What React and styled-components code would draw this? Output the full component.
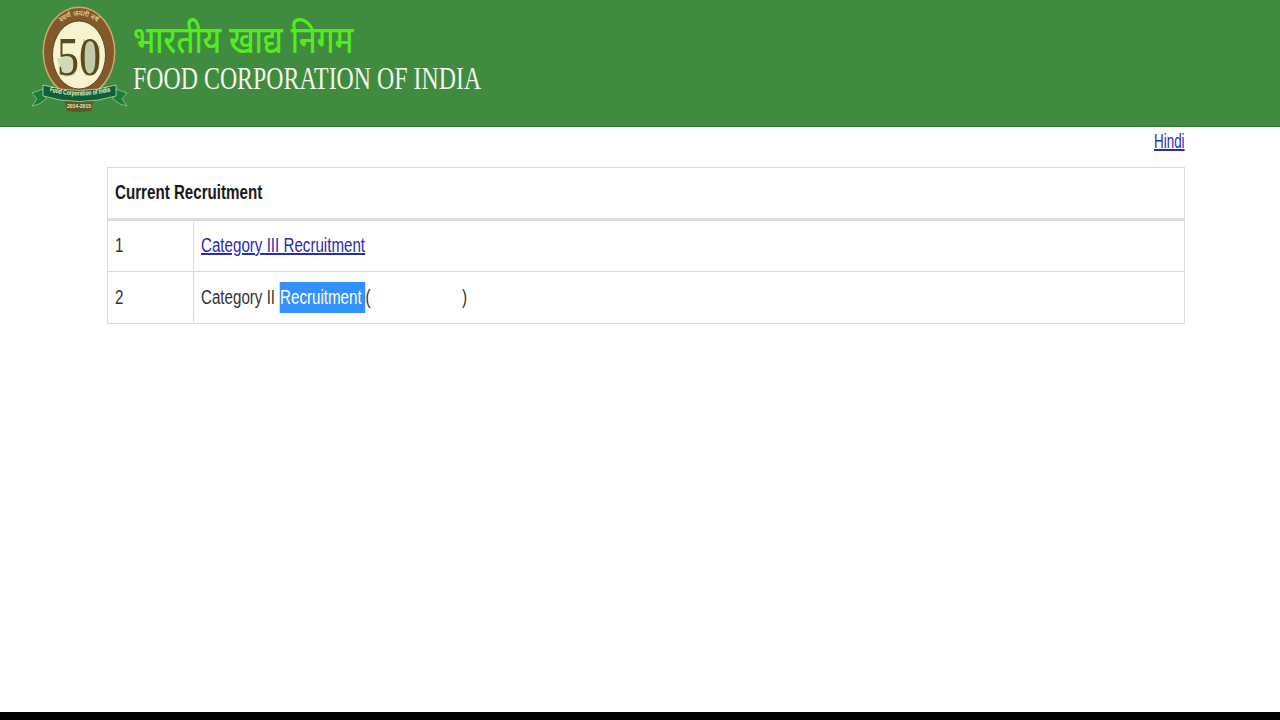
import styled, { createGlobalStyle } from "styled-components"

const GlobalStyle = createGlobalStyle`
    html, body {
        margin: 0;
        padding: 0;
        background: #fff;
    }
    body {
        font-family: "Liberation Sans", Arial, sans-serif;
        color: #333;
    }
`

const Page = styled.div`
    display: flex;
    flex-direction: column;
    height: 720px;
    overflow: hidden;
`

const Header = styled.header`
    display: flex;
    flex: none;
    align-items: flex-start;
    height: 126px;
    padding-left: 31px;
    background-color: #418b41;
    border-bottom: 1px solid #2f7a35;
`

const Logo = styled.svg`
    flex: none;
    width: 98px;
    height: 112px;
    margin-top: 3px;
`

const Brand = styled.div`
    display: flex;
    flex-direction: column;
    margin-left: 4px;
    padding-top: 16px;
`

const HindiName = styled.div`
    height: 45px;
    font-family: "Noto Sans", "Noto Sans Devanagari", sans-serif;
    font-size: 38px;
    line-height: 45px;
    font-weight: 500;
    color: #52ee1c;
    white-space: nowrap;
    transform: scaleX(0.808);
    transform-origin: left center;
`

const EnglishName = styled.div`
    font-family: "Liberation Serif", serif;
    font-size: 31px;
    line-height: 36px;
    color: #f1f7ea;
    white-space: nowrap;
    transform: scaleX(0.77);
    transform-origin: left center;
`

const Main = styled.main`
    flex: 1;
    padding: 0 95px 0 107px;
`

const LangRow = styled.div`
    display: flex;
    justify-content: flex-end;
    height: 40px;
    align-items: flex-start;
    padding-top: 2px;
    box-sizing: border-box;
`

const Narrow = styled.span`
    display: inline-block;
    font-size: 20px;
    line-height: 24px;
    white-space: pre;
    transform: scaleX(${(p) => p.$squeeze || 0.757});
    transform-origin: ${(p) => (p.$right ? "right" : "left")} center;
`

const TextLink = styled.a`
    color: #2a2ab8;
    text-decoration: underline;
`

const Table = styled.table`
    width: 1078px;
    border-collapse: collapse;
    table-layout: fixed;
`

const HeadCell = styled.th`
    height: 48px;
    padding: 0 7px 2px;
    box-sizing: content-box;
    text-align: left;
    font-weight: 700;
    color: #1a1a1a;
    border: 1px solid #dcdcdc;
    border-bottom: 3px solid #dcdcdc;
`

const Cell = styled.td`
    height: 52px;
    padding: 0 7px 2px;
    box-sizing: border-box;
    border: 1px solid #dcdcdc;
    color: #333;
`

const NumberCol = styled.col`
    width: 86px;
`

const Selected = styled.span`
    display: inline-block;
    padding: 3px 5px 4px 0;
    line-height: 24px;
    margin: -3px 0 -4px 1px;
    background-color: #3390ff;
    color: #fff;
`

const Blank = styled.span`
    display: inline-block;
    width: 121px;
`

const BottomBar = styled.div`
    flex: none;
    height: 8px;
    background-color: #000;
`

function EmblemLogo() {
    return (
        <Logo viewBox="0 0 98 112">
            <defs>
                <path id="ringArc" d="M19 36 A31 36 0 0 1 77 36" />
                <path id="ribbonArc" d="M14 87 Q48 98 84 87" />
            </defs>
            <path d="M33 96 L63 96 L60 108 Q48 110 36 108 Z" fill="#5d5a2a" />
            <ellipse cx="48" cy="49" rx="36.5" ry="45.5" fill="#c9ab6e" />
            <ellipse cx="48" cy="49" rx="35" ry="44" fill="#84592a" />
            <ellipse cx="48" cy="52" rx="26.5" ry="34" fill="#f7f3cf" stroke="#4d3616" strokeWidth="0.8" />
            <path d="M52 36 L69 43 L68 66 L54 73 Z" fill="#aebd9c" opacity="0.75" />
            <path d="M26 56 L42 50 L44 72 L33 74 Z" fill="#c6d0b2" opacity="0.75" />
            <text fontFamily="Noto Sans, sans-serif" fontSize="7" fill="#f4e6b8">
                <textPath href="#ringArc" startOffset="50%" textAnchor="middle">स्वर्ण जयंती वर्ष</textPath>
            </text>
            <text x="48" y="72" textAnchor="middle" fontFamily="Liberation Serif, serif" fontSize="54" fill="#5c4a1d" textLength="44" lengthAdjust="spacingAndGlyphs">50</text>
            <path d="M1 90 L15 85 L15 96 L8 101 L1 103 L6 96 Z" fill="#187f3a" stroke="#dfe6b8" strokeWidth="0.5" />
            <path d="M96 90 L82 85 L82 96 L89 101 L96 103 L91 96 Z" fill="#187f3a" stroke="#dfe6b8" strokeWidth="0.5" />
            <path d="M12 82 Q48 93 85 82 L85 93 Q48 104 12 93 Z" fill="#0b6238" stroke="#e8e2b0" strokeWidth="0.7" />
            <text fontFamily="Liberation Sans, sans-serif" fontSize="7" fontWeight="700" fill="#f3f1c4">
                <textPath href="#ribbonArc" startOffset="50%" textAnchor="middle" textLength="62" lengthAdjust="spacingAndGlyphs">Food Corporation of India</textPath>
            </text>
            <text x="48" y="105" textAnchor="middle" fontFamily="Liberation Sans, sans-serif" fontSize="5" fontWeight="700" fill="#f3e8b8">2014-2015</text>
        </Logo>
    )
}

export default function App() {
    return (
        <Page>
            <GlobalStyle />
            <Header>
                <EmblemLogo />
                <Brand>
                    <HindiName>भारतीय खाद्य निगम</HindiName>
                    <EnglishName>FOOD CORPORATION OF INDIA</EnglishName>
                </Brand>
            </Header>
            <Main>
                <LangRow>
                    <Narrow $right $squeeze={0.67}>
                        <TextLink href="#hindi">Hindi</TextLink>
                    </Narrow>
                </LangRow>
                <Table>
                    <colgroup>
                        <NumberCol />
                        <col />
                    </colgroup>
                    <thead>
                        <tr>
                            <HeadCell colSpan={2}>
                                <Narrow>Current Recruitment</Narrow>
                            </HeadCell>
                        </tr>
                    </thead>
                    <tbody>
                        <tr>
                            <Cell>
                                <Narrow>1</Narrow>
                            </Cell>
                            <Cell>
                                <Narrow>
                                    <TextLink href="#cat3">Category III Recruitment</TextLink>
                                </Narrow>
                            </Cell>
                        </tr>
                        <tr>
                            <Cell>
                                <Narrow>2</Narrow>
                            </Cell>
                            <Cell>
                                <Narrow>
                                    Category II <Selected>Recruitment</Selected>(<Blank />)
                                </Narrow>
                            </Cell>
                        </tr>
                    </tbody>
                </Table>
            </Main>
            <BottomBar />
        </Page>
    )
}
